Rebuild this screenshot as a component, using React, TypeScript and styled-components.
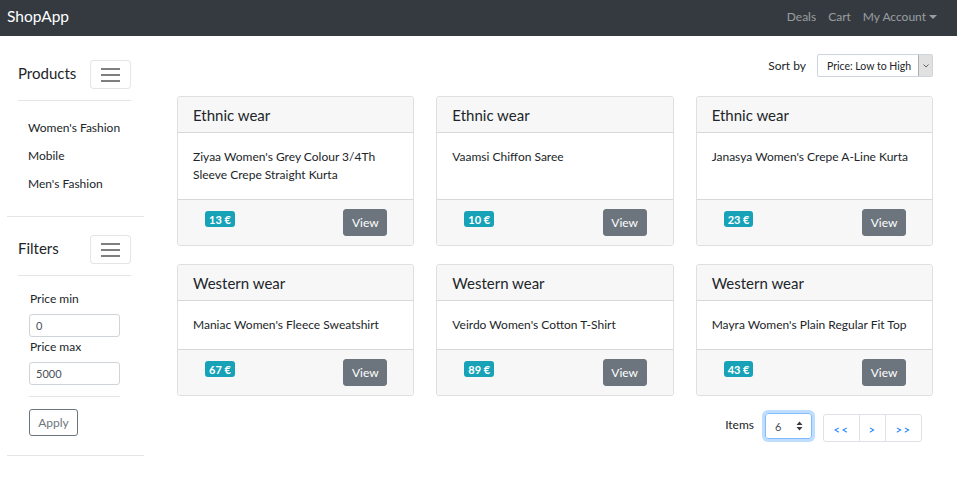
import React from "react";
import styled, { createGlobalStyle } from "styled-components";

const Global = createGlobalStyle`
  * { box-sizing: border-box; }
  body {
    margin: 0;
    font-family: "Lato", "Noto Sans", sans-serif;
    font-size: 12px;
    color: #212529;
    background: #fff;
  }
`;

const Navbar = styled.nav`
  height: 36px;
  background: #343a40;
  display: flex;
  align-items: center;
  justify-content: space-between;
  padding: 0 20px 0 7px;
`;

const Brand = styled.div`
  color: #fff;
  font-size: 15.5px;
  margin-top: -4px;
`;

const NavLinks = styled.div`
  display: flex;
  gap: 12px;
  align-items: center;
  margin-top: -4px;
`;

const NavLink = styled.span`
  color: rgba(255, 255, 255, 0.5);
  font-size: 12px;
  display: inline-flex;
  align-items: center;
`;

const Caret = styled.span`
  display: inline-block;
  margin-left: 3px;
  border-top: 4px solid rgba(255, 255, 255, 0.5);
  border-left: 4px solid transparent;
  border-right: 4px solid transparent;
  margin-top: 1px;
`;

const Layout = styled.div`
  display: flex;
  align-items: flex-start;
`;

const Sidebar = styled.aside`
  width: 137px;
  margin-left: 7px;
  margin-top: 24px;
  flex: none;
`;

const SideSection = styled.section<{ $top?: number }>`
  border-bottom: 1px solid rgba(0, 0, 0, 0.1);
  padding: ${(p) => p.$top ?? 0}px 13px 0 11px;
`;

const SectionHead = styled.div`
  display: flex;
  align-items: center;
  justify-content: space-between;
  height: 29px;
  font-size: 15px;
`;

const SectionTitle = styled.span`
  margin-top: -3px;
`;

const Toggler = styled.button`
  width: 41px;
  height: 29px;
  border: 1px solid rgba(0, 0, 0, 0.1);
  border-radius: 4px;
  background: #fff;
  padding: 0;
  display: flex;
  flex-direction: column;
  align-items: center;
  justify-content: center;
  gap: 4px;
`;

const Bar = styled.span`
  display: block;
  width: 19px;
  height: 2px;
  background: rgba(0, 0, 0, 0.5);
`;

const Hr = styled.div`
  border-top: 1px solid rgba(0, 0, 0, 0.1);
  margin-top: 11px;
`;

const CatList = styled.ul`
  list-style: none;
  margin: 0;
  padding: 18px 0 23px 10px;
  display: flex;
  flex-direction: column;
  gap: 10px;
`;

const CatItem = styled.li`
  line-height: 18px;
`;

const FilterBody = styled.div`
  padding: 14px 0 19px 11px;
`;

const Label = styled.div`
  line-height: 18px;
  margin-left: 1px;
`;

const Input = styled.div`
  width: 91px;
  height: 23px;
  border: 1px solid #ced4da;
  border-radius: 3px;
  font-size: 11px;
  padding: 0 6px;
  display: flex;
  align-items: center;
  margin: 6px 0 1px;
  color: #495057;
`;

const SmallHr = styled.div`
  width: 91px;
  border-top: 1px solid rgba(0, 0, 0, 0.1);
  margin: 11px 0 12px;
`;

const OutlineBtn = styled.button`
  font-family: inherit;
  font-size: 12px;
  color: #6c757d;
  background: #fff;
  border: 1px solid #6c757d;
  border-radius: 3px;
  height: 27px;
  width: 49px;
  padding: 0;
  display: block;
`;

const Main = styled.main`
  flex: 1;
  padding: 18px 24px 0 33px;
`;

const SortRow = styled.div`
  display: flex;
  justify-content: flex-end;
  align-items: center;
  gap: 11px;
`;

const SortSelect = styled.div`
  width: 116px;
  height: 23px;
  border: 1px solid #ced4da;
  border-radius: 2px;
  display: flex;
  align-items: stretch;
  font-size: 10.5px;
`;

const SortText = styled.span`
  flex: 1;
  display: flex;
  align-items: center;
  padding-left: 9px;
  color: #212529;
`;

const SortArrow = styled.span`
  width: 14px;
  background: #e1e1e1;
  border-left: 1px solid #adadad;
  display: flex;
  align-items: center;
  justify-content: center;
`;

const Grid = styled.div`
  display: grid;
  grid-template-columns: repeat(3, 1fr);
  column-gap: 22px;
  row-gap: 18px;
  margin-top: 19px;
`;

const Card = styled.div`
  border: 1px solid rgba(0, 0, 0, 0.125);
  border-radius: 3px;
  overflow: hidden;
  display: flex;
  flex-direction: column;
`;

const CardHeader = styled.div`
  height: 36px;
  background: #f7f7f7;
  border-bottom: 1px solid rgba(0, 0, 0, 0.125);
  padding: 0 15px;
  font-size: 15px;
  display: flex;
  align-items: center;
`;

const CardBody = styled.div`
  padding: 15px 15px;
  line-height: 18px;
  flex: 1;
`;

const CardFooter = styled.div`
  background: #f7f7f7;
  border-top: 1px solid rgba(0, 0, 0, 0.125);
  padding: 9px 26px 9px 27px;
  display: flex;
  justify-content: space-between;
  align-items: flex-start;
`;

const Badge = styled.span`
  background: #17a2b8;
  color: #fff;
  font-weight: 700;
  font-size: 11px;
  border-radius: 3px;
  height: 16px;
  padding: 0 4px;
  display: inline-flex;
  align-items: center;
  margin-top: 2px;
`;

const ViewBtn = styled.button`
  font-family: inherit;
  font-size: 12px;
  color: #fff;
  background: #6c757d;
  border: 1px solid #6c757d;
  border-radius: 3px;
  height: 27px;
  width: 44px;
  padding: 0;
`;

const PagerRow = styled.div`
  display: flex;
  justify-content: flex-end;
  align-items: flex-start;
  margin-top: 17px;
  padding-right: 11px;
`;

const ItemsLabel = styled.span`
  margin-top: 4px;
  margin-right: 11px;
`;

const ItemsSelect = styled.div`
  width: 47px;
  height: 26px;
  border: 1px solid #80bdff;
  border-radius: 3px;
  box-shadow: 0 0 0 3px rgba(0, 123, 255, 0.25);
  display: flex;
  align-items: center;
  justify-content: space-between;
  padding: 0 8px 0 9px;
  font-size: 11px;
  color: #495057;
  margin-right: 11px;
`;

const Pager = styled.div`
  display: flex;
  border: 1px solid #dee2e6;
  border-radius: 3px;
  height: 28px;
  margin-top: 1px;
`;

const PageCell = styled.span<{ $w: number }>`
  width: ${(p) => p.$w}px;
  display: flex;
  align-items: center;
  justify-content: center;
  color: #007bff;
  font-size: 11px;
  letter-spacing: 1.5px;
  padding-top: 2px;
  & + & {
    border-left: 1px solid #dee2e6;
  }
`;

const products = [
  { cat: "Ethnic wear", name: "Ziyaa Women's Grey Colour 3/4Th Sleeve Crepe Straight Kurta", price: 13 },
  { cat: "Ethnic wear", name: "Vaamsi Chiffon Saree", price: 10 },
  { cat: "Ethnic wear", name: "Janasya Women's Crepe A-Line Kurta", price: 23 },
  { cat: "Western wear", name: "Maniac Women's Fleece Sweatshirt", price: 67 },
  { cat: "Western wear", name: "Veirdo Women's Cotton T-Shirt", price: 89 },
  { cat: "Western wear", name: "Mayra Women's Plain Regular Fit Top", price: 43 },
];

const Hamburger = () => (
  <Toggler>
    <Bar />
    <Bar />
    <Bar />
  </Toggler>
);

export default function App() {
  return (
    <>
      <Global />
      <Navbar>
        <Brand>ShopApp</Brand>
        <NavLinks>
          <NavLink>Deals</NavLink>
          <NavLink>Cart</NavLink>
          <NavLink>
            My Account
            <Caret />
          </NavLink>
        </NavLinks>
      </Navbar>
      <Layout>
        <Sidebar>
          <SideSection>
            <SectionHead>
              <SectionTitle>Products</SectionTitle>
              <Hamburger />
            </SectionHead>
            <Hr />
            <CatList>
              <CatItem>Women's Fashion</CatItem>
              <CatItem>Mobile</CatItem>
              <CatItem>Men's Fashion</CatItem>
            </CatList>
          </SideSection>
          <SideSection $top={18}>
            <SectionHead>
              <SectionTitle>Filters</SectionTitle>
              <Hamburger />
            </SectionHead>
            <Hr />
            <FilterBody>
              <Label>Price min</Label>
              <Input>0</Input>
              <Label>Price max</Label>
              <Input>5000</Input>
              <SmallHr />
              <OutlineBtn>Apply</OutlineBtn>
            </FilterBody>
          </SideSection>
        </Sidebar>
        <Main>
          <SortRow>
            <span>Sort by</span>
            <SortSelect>
              <SortText>Price: Low to High</SortText>
              <SortArrow>
                <svg width="6" height="4" viewBox="0 0 6 4">
                  <path d="M0.5 0.5 L3 3 L5.5 0.5" fill="none" stroke="#555" strokeWidth="0.9" />
                </svg>
              </SortArrow>
            </SortSelect>
          </SortRow>
          <Grid>
            {products.map((p, i) => (
              <Card key={i}>
                <CardHeader>{p.cat}</CardHeader>
                <CardBody>{p.name}</CardBody>
                <CardFooter>
                  <Badge>{p.price} €</Badge>
                  <ViewBtn>View</ViewBtn>
                </CardFooter>
              </Card>
            ))}
          </Grid>
          <PagerRow>
            <ItemsLabel>Items</ItemsLabel>
            <ItemsSelect>
              <span>6</span>
              <svg width="7" height="10" viewBox="0 0 7 10">
                <path d="M0.5 4 L3.5 0.5 L6.5 4 Z M0.5 6 L3.5 9.5 L6.5 6 Z" fill="#343a40" />
              </svg>
            </ItemsSelect>
            <Pager>
              <PageCell $w={35}>&lt;&lt;</PageCell>
              <PageCell $w={26}>&gt;</PageCell>
              <PageCell $w={36}>&gt;&gt;</PageCell>
            </Pager>
          </PagerRow>
        </Main>
      </Layout>
    </>
  );
}
